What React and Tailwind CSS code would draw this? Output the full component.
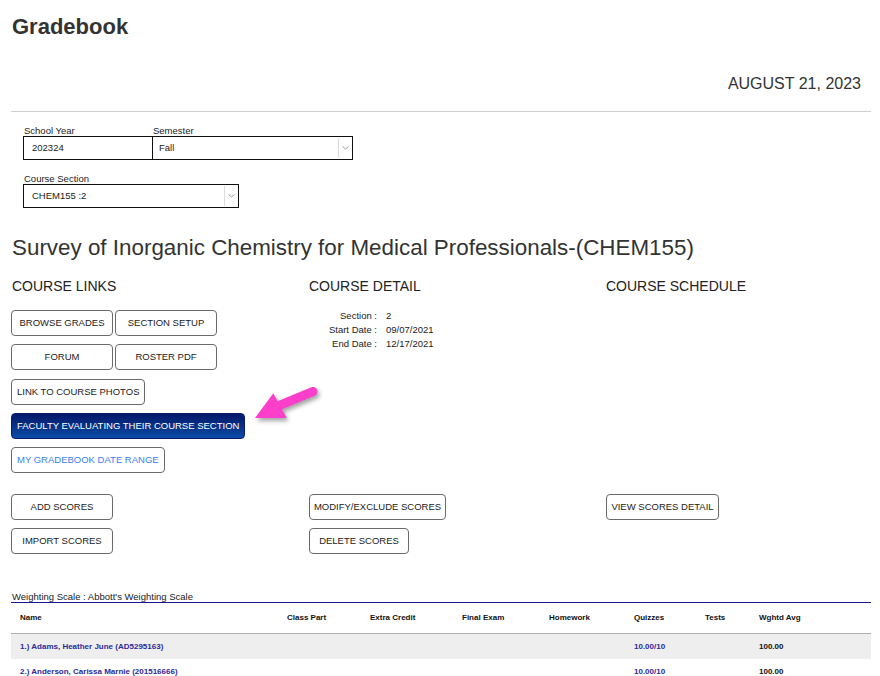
import React from "react";

function Chevron() {
  return (
    <svg width="7" height="4" viewBox="0 0 7 4" className="block">
      <path d="M0.5 0.5 L3.5 3 L6.5 0.5" fill="none" stroke="#9a9a9a" strokeWidth="1" />
    </svg>
  );
}

function SelectBox({ value, className = "", pad = "pl-[8px]" }) {
  return (
    <div className={`h-[24px] border border-[#111] flex items-center bg-white ${className}`}>
      <span className={`flex-1 ${pad} text-[9.5px] text-[#222] leading-none`}>{value}</span>
      <span className="w-[14px] h-[20px] border-l border-[#dcdcdc] flex items-center justify-center">
        <Chevron />
      </span>
    </div>
  );
}

function Btn({ children, className = "" }) {
  return (
    <div
      className={`h-[26px] rounded-[4px] border border-[#6a6a6a] bg-white text-[9.5px] text-[#222] flex items-center justify-center whitespace-nowrap leading-none ${className}`}
    >
      {children}
    </div>
  );
}

const cols = "grid grid-cols-[267px_83px_92px_87px_85px_71px_54px_1fr]";

function Row({ cells, shaded }) {
  return (
    <div className={`${cols} h-[25px] items-center text-[8px] font-bold ${shaded ? "bg-[#eeeeee]" : "bg-white"}`}>
      {cells.map((c, i) => (
        <div key={i} className={`pl-[9px] whitespace-nowrap ${i === 0 || i === 5 ? "text-[#2d2a9a]" : "text-[#111]"}`}>
          {c}
        </div>
      ))}
    </div>
  );
}

export default function App() {
  return (
    <div className="relative w-[880px] h-[676px] overflow-hidden bg-white font-['Liberation_Sans',Arial,sans-serif] text-[#333]">
      <div className="ml-[11px] w-[860px]">
        {/* Title */}
        <div className="pt-[14px] pl-px text-[22px] leading-[26px] font-bold text-[#333]">Gradebook</div>

        {/* Date */}
        <div className="mt-[34px] pr-[10px] text-right text-[16px] leading-[20px] text-[#333]">AUGUST 21, 2023</div>

        <div className="mt-[17px] h-px bg-[#cfcfcf]" />

        {/* Form */}
        <div className="pl-[12px] mt-[14px]">
          <div className="flex">
            <div className="w-[130px]">
              <div className="text-[9.5px] leading-[10px] text-[#222] pl-px">School Year</div>
              <div className="h-[24px] border border-[#111] flex items-center pl-[8px] text-[9.5px] text-[#222] leading-none">202324</div>
            </div>
            <div className="w-[200px]">
              <div className="text-[9.5px] leading-[10px] text-[#222]">Semester</div>
              <SelectBox value="Fall" className="border-l-0" pad="pl-[6px]" />
            </div>
          </div>
          <div className="mt-[14px]">
            <div className="text-[9.5px] leading-[10px] text-[#222] pl-px">Course Section</div>
            <SelectBox value="CHEM155 :2" className="w-[216px]" />
          </div>
        </div>

        {/* Course title */}
        <div className="mt-[27px] pl-px text-[22.4px] leading-[26px] text-[#333] whitespace-nowrap">
          Survey of Inorganic Chemistry for Medical Professionals-(CHEM155)
        </div>

        {/* Three columns */}
        <div className="mt-[17px] grid grid-cols-[298px_297px_1fr]">
          <div>
            <div className="pl-px text-[14px] leading-[16px] text-[#222]">COURSE LINKS</div>
            <div className="mt-[16px] flex flex-col items-start">
              <div className="flex gap-[2px]">
                <Btn className="w-[102px]">BROWSE GRADES</Btn>
                <Btn className="w-[102px]">SECTION SETUP</Btn>
              </div>
              <div className="mt-[8px] flex gap-[2px]">
                <Btn className="w-[102px]">FORUM</Btn>
                <Btn className="w-[102px]">ROSTER PDF</Btn>
              </div>
              <Btn className="mt-[9px] px-[5px]">LINK TO COURSE PHOTOS</Btn>
              <div className="mt-[8px] h-[26px] rounded-[4px] border border-[#0b1b6a] bg-linear-to-b from-[#05186a] to-[#0b4ba6] text-white text-[9.5px] flex items-center px-[5px] whitespace-nowrap leading-none">
                FACULTY EVALUATING THEIR COURSE SECTION
              </div>
              <Btn className="mt-[8px] px-[5px]">
                <span className="text-[#3a80ee]">MY GRADEBOOK DATE RANGE</span>
              </Btn>
            </div>
          </div>
          <div>
            <div className="text-[14px] leading-[16px] text-[#222]">COURSE DETAIL</div>
            <div className="mt-[15px] text-[9.5px] leading-[14px] text-[#222]">
              {[
                ["Section :", "2"],
                ["Start Date :", "09/07/2021"],
                ["End Date :", "12/17/2021"],
              ].map(([k, v]) => (
                <div key={k} className="flex">
                  <div className="w-[68px] text-right">{k}</div>
                  <div className="ml-[9px]">{v}</div>
                </div>
              ))}
            </div>
          </div>
          <div>
            <div className="text-[14px] leading-[16px] text-[#222]">COURSE SCHEDULE</div>
          </div>
        </div>

        {/* Score buttons */}
        <div className="mt-[21px] grid grid-cols-[298px_297px_1fr]">
          <div className="flex flex-col items-start gap-[8px]">
            <Btn className="w-[102px]">ADD SCORES</Btn>
            <Btn className="w-[102px]">IMPORT SCORES</Btn>
          </div>
          <div className="flex flex-col items-start gap-[8px]">
            <Btn className="w-[137px]">MODIFY/EXCLUDE SCORES</Btn>
            <Btn className="w-[100px]">DELETE SCORES</Btn>
          </div>
          <div className="flex flex-col items-start gap-[8px]">
            <Btn className="w-[113px]">VIEW SCORES DETAIL</Btn>
          </div>
        </div>

        {/* Weighting scale table */}
        <div className="mt-[37px] pl-px text-[9.5px] leading-[11px] text-[#222] border-b border-[#1a1a96]">
          Weighting Scale : Abbott's Weighting Scale
        </div>
        <div className={`${cols} h-[31px] items-center text-[8px] font-bold text-[#111] border-b border-[#b0b0b0]`}>
          {["Name", "Class Part", "Extra Credit", "Final Exam", "Homework", "Quizzes", "Tests", "Wghtd Avg"].map((h) => (
            <div key={h} className="pl-[9px] whitespace-nowrap">{h}</div>
          ))}
        </div>
        <Row shaded cells={["1.) Adams, Heather June (AD5295163)", "", "", "", "", "10.00/10", "", "100.00"]} />
        <Row cells={["2.) Anderson, Carissa Marnie (201516666)", "", "", "", "", "10.00/10", "", "100.00"]} />
      </div>

      {/* Pink annotation arrow */}
      <svg
        width="75"
        height="45"
        viewBox="0 0 75 45"
        className="absolute left-[250px] top-[380px] drop-shadow-[2px_3px_2px_rgba(0,0,0,0.35)]"
      >
        <line x1="28" y1="26" x2="63" y2="11.5" stroke="#fc3fcb" strokeWidth="9" strokeLinecap="round" />
        <polygon points="5,38 23.3,13.3 36.7,38" fill="#fc3fcb" />
      </svg>
    </div>
  );
}
